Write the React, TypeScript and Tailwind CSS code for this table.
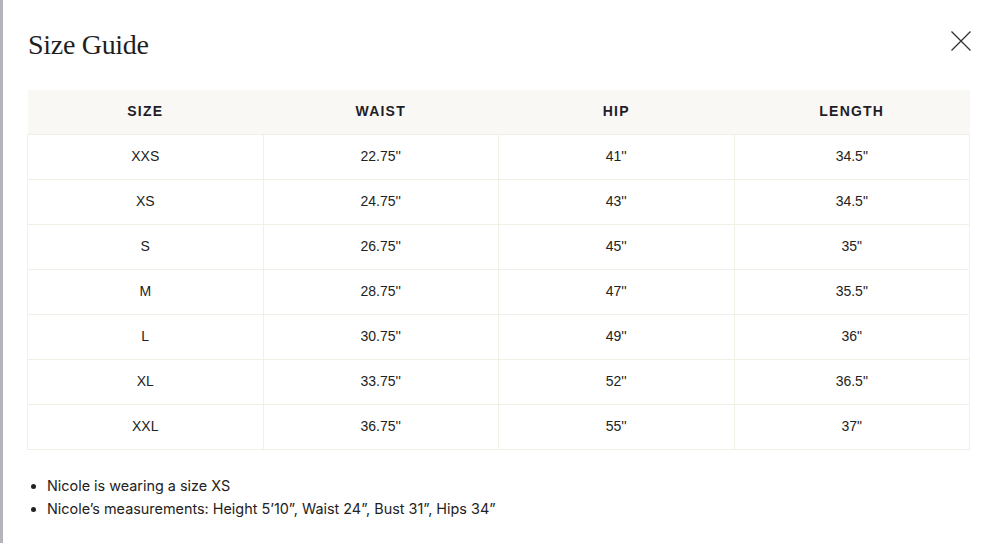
const ROWS: [string, string, string, string][] = [
  ["XXS", "22.75''", "41''", '34.5"'],
  ["XS", "24.75''", "43''", '34.5"'],
  ["S", "26.75''", "45''", '35"'],
  ["M", "28.75''", "47''", '35.5"'],
  ["L", "30.75''", "49''", '36"'],
  ["XL", "33.75''", "52''", '36.5"'],
  ["XXL", "36.75''", "55''", '37"'],
];

const HEADERS = ["SIZE", "WAIST", "HIP", "LENGTH"];

export default function App() {
  return (
    <div className="flex h-[543px] w-[994px] bg-white">
      <div className="w-[3px] shrink-0 bg-[#b4b4bb]" />
      <div className="flex-1 pl-[24px] pr-[24px]" style={{ fontFamily: '"Liberation Sans", Arial, sans-serif' }}>
        <div className="flex h-[90px] items-start justify-between">
          <h2
            className="mt-[31px] ml-px text-[28px] leading-none tracking-[-0.3px] text-[#1f1f1f]"
            style={{ fontFamily: '"Liberation Serif", "Times New Roman", serif' }}
          >
            Size Guide
          </h2>
          <button type="button" className="mt-[31px] mr-[-1px] text-[#333]" aria-label="Close">
            <svg width="20" height="20" viewBox="0 0 20 20" fill="none" stroke="currentColor" strokeWidth="1.3">
              <path d="M0.5 0.5 L19.5 19.5 M19.5 0.5 L0.5 19.5" />
            </svg>
          </button>
        </div>

        <table className="w-[943px] table-fixed border-collapse text-center text-[14px] text-[#222]">
          <thead>
            <tr className="h-[44px] bg-[#faf8f4]">
              {HEADERS.map((h) => (
                <th key={h} className="font-bold tracking-[1.2px] text-[#1e1e28]">
                  {h}
                </th>
              ))}
            </tr>
          </thead>
          <tbody>
            {ROWS.map((row) => (
              <tr key={row[0]} className="h-[45px]">
                {row.map((cell, i) => (
                  <td key={i} className="border border-[#f1efe6]">
                    {cell}
                  </td>
                ))}
              </tr>
            ))}
          </tbody>
        </table>

        <ul
          className="mt-[24px] list-disc pl-[20px] text-[14.4px] leading-[23px] text-[#222]"
          style={{ fontFamily: "Inter, sans-serif" }}
        >
          <li>Nicole is wearing a size XS</li>
          <li>Nicole’s measurements: Height 5’10”, Waist 24”, Bust 31”, Hips 34”</li>
        </ul>
      </div>
    </div>
  );
}
